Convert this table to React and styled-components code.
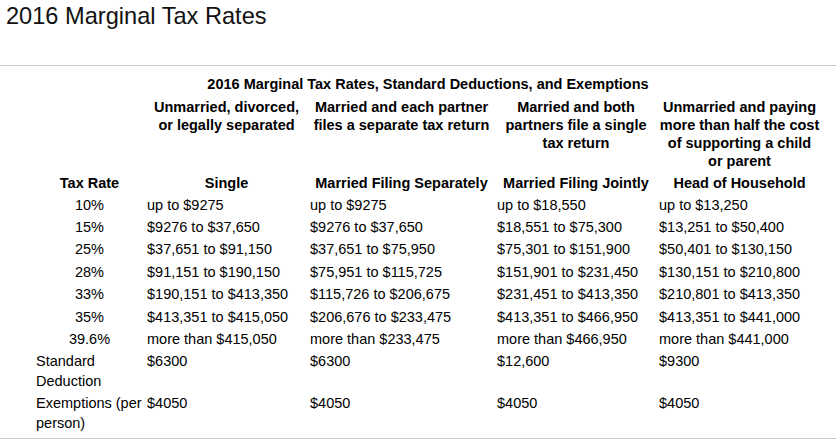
import React from 'react';
import styled, { createGlobalStyle } from 'styled-components';

const GlobalStyle = createGlobalStyle`
  html, body {
    margin: 0;
    padding: 0;
    background: #fff;
  }
  body {
    font-family: 'Liberation Sans', Arial, sans-serif;
    color: #000;
  }
`;

const statuses = [
  {
    name: 'Single',
    description: 'Unmarried, divorced, or legally separated',
  },
  {
    name: 'Married Filing Separately',
    description: 'Married and each partner files a separate tax return',
  },
  {
    name: 'Married Filing Jointly',
    description: 'Married and both partners file a single tax return',
  },
  {
    name: 'Head of Household',
    description:
      'Unmarried and paying more than half the cost of supporting a child or parent',
  },
];

const brackets = [
  ['10%', 'up to $9275', 'up to $9275', 'up to $18,550', 'up to $13,250'],
  ['15%', '$9276 to $37,650', '$9276 to $37,650', '$18,551 to $75,300', '$13,251 to $50,400'],
  ['25%', '$37,651 to $91,150', '$37,651 to $75,950', '$75,301 to $151,900', '$50,401 to $130,150'],
  ['28%', '$91,151 to $190,150', '$75,951 to $115,725', '$151,901 to $231,450', '$130,151 to $210,800'],
  ['33%', '$190,151 to $413,350', '$115,726 to $206,675', '$231,451 to $413,350', '$210,801 to $413,350'],
  ['35%', '$413,351 to $415,050', '$206,676 to $233,475', '$413,351 to $466,950', '$413,351 to $441,000'],
  ['39.6%', 'more than $415,050', 'more than $233,475', 'more than $466,950', 'more than $441,000'],
];

const extras = [
  ['Standard Deduction', '$6300', '$6300', '$12,600', '$9300'],
  ['Exemptions (per person)', '$4050', '$4050', '$4050', '$4050'],
];

const columnWidths = [111, 163, 187, 162, 165];

export default function App() {
  return (
    <>
      <GlobalStyle />
      <Header>
        <Title>2016 Marginal Tax Rates</Title>
      </Header>

      <Section>
        <RatesTable>
          <Caption>
            2016 Marginal Tax Rates, Standard Deductions, and Exemptions
          </Caption>
          <colgroup>
            {columnWidths.map((w, i) => (
              <col key={i} style={{ width: w }} />
            ))}
          </colgroup>
          <thead>
            <tr>
              <HeadCell />
              {statuses.map(s => (
                <HeadCell key={s.name}>{s.description}</HeadCell>
              ))}
            </tr>
            <tr>
              <HeadCell>Tax Rate</HeadCell>
              {statuses.map(s => (
                <HeadCell key={s.name}>{s.name}</HeadCell>
              ))}
            </tr>
          </thead>
          <tbody>
            {brackets.map(([rate, ...amounts]) => (
              <tr key={rate}>
                <Cell center>{rate}</Cell>
                {amounts.map((amount, i) => (
                  <Cell key={i}>{amount}</Cell>
                ))}
              </tr>
            ))}
            {extras.map(([label, ...amounts]) => (
              <tr key={label}>
                <Cell>{label}</Cell>
                {amounts.map((amount, i) => (
                  <Cell key={i}>{amount}</Cell>
                ))}
              </tr>
            ))}
          </tbody>
        </RatesTable>
      </Section>
    </>
  );
}

const Header = styled.header`
  padding: 3px 6px 35px;
  border-bottom: 1px solid #c8c8c8;
`;

const Title = styled.h1`
  margin: 0;
  font-size: 23.6px;
  font-weight: normal;
  line-height: 27px;
  color: #111;
`;

const Section = styled.section`
  padding: 9px 0 3.5px 34px;
  border-bottom: 1px solid #c8c8c8;
`;

const RatesTable = styled.table`
  table-layout: fixed;
  width: 788px;
  border-collapse: separate;
  border-spacing: 0;
  font-size: 14.5px;
`;

const Caption = styled.caption`
  font-weight: bold;
  line-height: 18px;
  padding-bottom: 3px;
  text-align: center;
`;

const HeadCell = styled.th`
  padding: 2px 2px;
  font-weight: bold;
  line-height: 18px;
  text-align: center;
  vertical-align: top;
`;

const Cell = styled.td`
  padding: 1.5px 2px;
  line-height: 19.4px;
  vertical-align: top;
  text-align: ${p => (p.center ? 'center' : 'left')};
`;
